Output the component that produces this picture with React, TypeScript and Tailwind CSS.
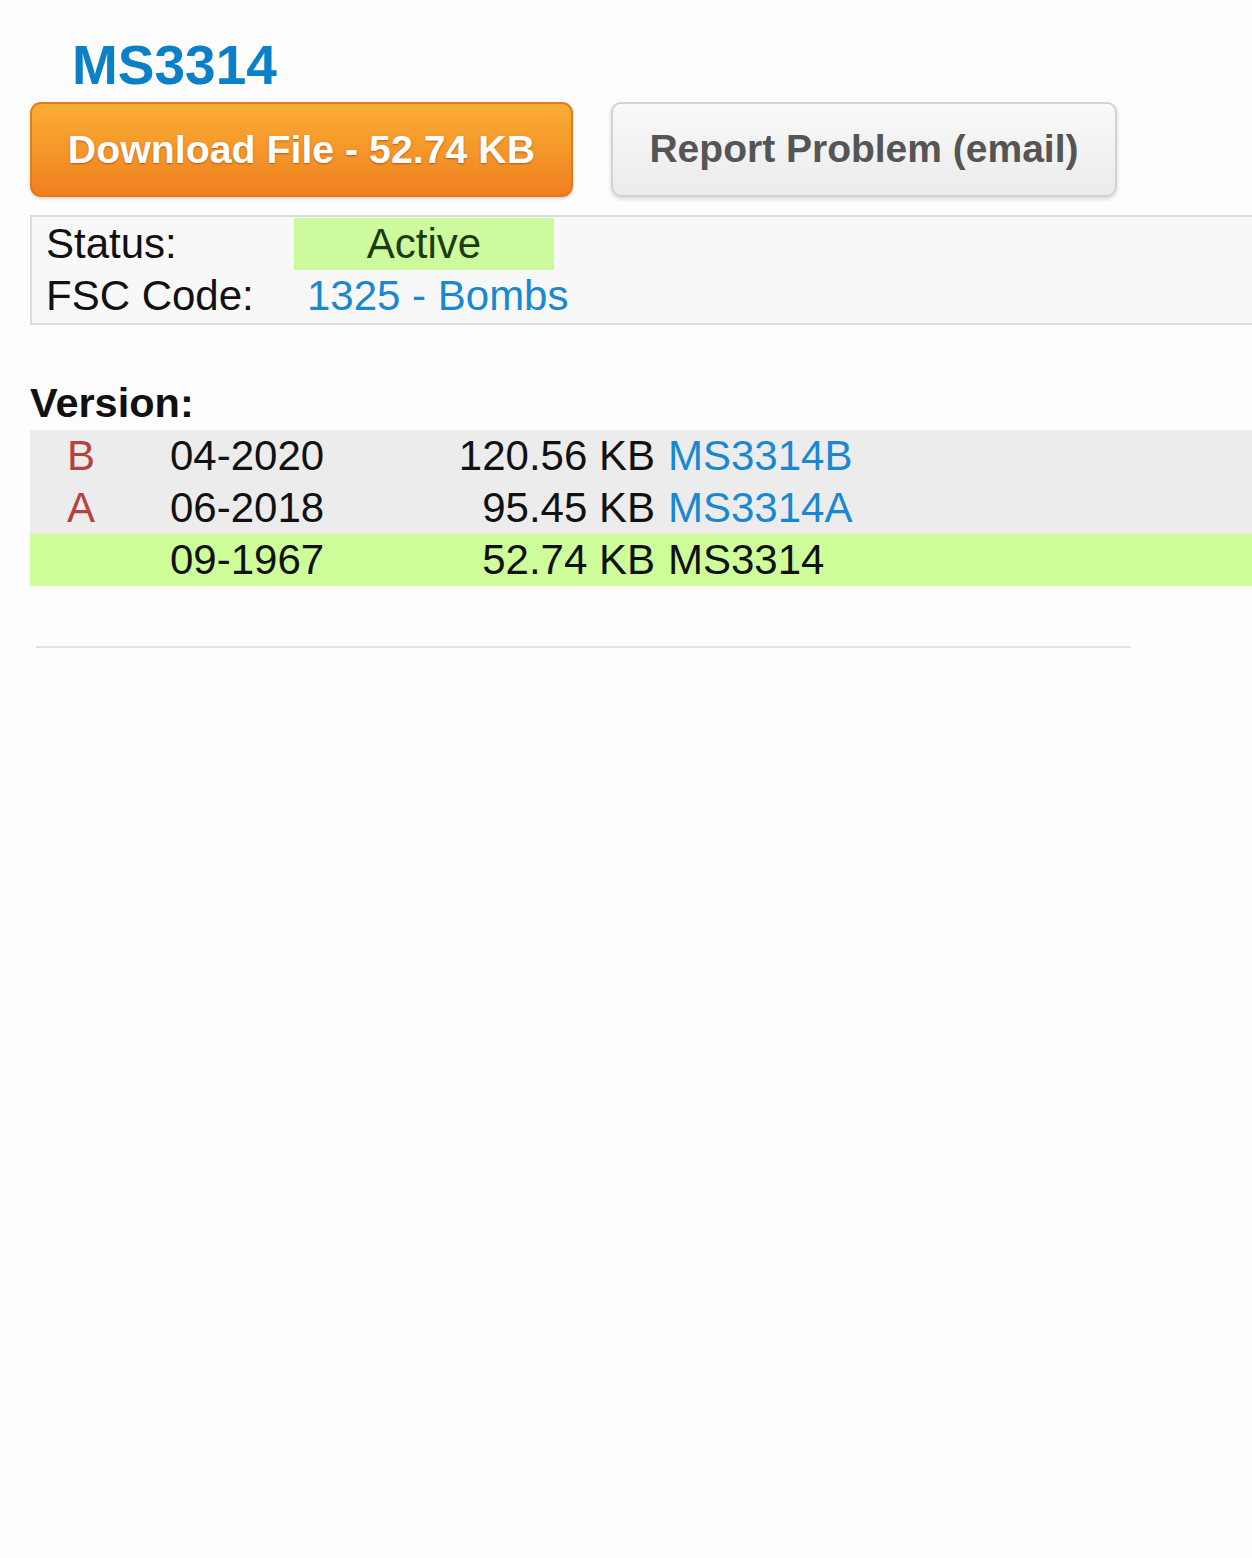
import React from "react";

const font = { fontFamily: '"Liberation Sans", Arial, Helvetica, sans-serif' };

export default function App() {
  const versions = [
    { rev: "B", date: "04-2020", size: "120.56 KB", name: "MS3314B", link: true },
    { rev: "A", date: "06-2018", size: "95.45 KB", name: "MS3314A", link: true },
    { rev: "", date: "09-1967", size: "52.74 KB", name: "MS3314", link: false },
  ];
  return (
    <div className="w-[1252px] min-h-[1558px] overflow-hidden bg-[#fdfdfd] text-[#111]" style={font}>
      <div className="pt-[34px]">
        <h1 className="ml-[72px] text-[55px] leading-[62px] font-bold text-[#0b80c8]">MS3314</h1>
        <div className="mt-[6px] ml-[30px] flex gap-[38px]">
          <button className="w-[543px] h-[95px] rounded-[11px] border-2 border-[#e57a16] bg-gradient-to-b from-[#f9ad35] to-[#f0801f] text-white font-bold text-[39.3px] [text-shadow:0_1px_2px_rgba(120,50,0,0.55)] shadow-[0_2px_3px_rgba(0,0,0,0.15)]">
            Download File - 52.74 KB
          </button>
          <button className="w-[506px] h-[95px] rounded-[10px] border-2 border-[#d2d2d2] bg-gradient-to-b from-[#f9f9f9] to-[#ebebeb] text-[#555] font-bold text-[39px] shadow-[0_2px_4px_rgba(0,0,0,0.15)]">
            Report Problem (email)
          </button>
        </div>
        <div className="mt-[18px] ml-[30px] w-[1250px] border-2 border-[#dcdcdc] bg-[#f8f8f8] pt-px pb-px text-[42px] leading-[52px]">
          <div className="flex">
            <div className="w-[262px] pl-[14px]">Status:</div>
            <div className="w-[260px] bg-[#ccfa9c] text-center text-[#1d3a12]">Active</div>
          </div>
          <div className="flex">
            <div className="w-[262px] pl-[14px]">FSC Code:</div>
            <div className="pl-[13px] text-[#1a88d0]">1325 - Bombs</div>
          </div>
        </div>
        <div className="mt-[51px] ml-[30px] text-[41.5px] leading-[54px] font-bold">Version:</div>
        <div className="ml-[30px] w-[1230px] text-[42px] leading-[52px]">
          {versions.map((v) => (
            <div
              key={v.date}
              className={`flex ${v.link ? "bg-[#ececec]" : "bg-[#cdfe99]"}`}
            >
              <div className="w-[102px] text-center text-[#b5423f]">{v.rev}</div>
              <div className="w-[250px] pl-[38px]">{v.date}</div>
              <div className="w-[273px] text-right">{v.size}</div>
              <div className={`pl-[13px] ${v.link ? "text-[#1a88d0]" : ""}`}>{v.name}</div>
            </div>
          ))}
        </div>
        <div className="mt-[60px] ml-[36px] w-[1095px] h-[2px] bg-[#e2e2e2]" />
      </div>
    </div>
  );
}
